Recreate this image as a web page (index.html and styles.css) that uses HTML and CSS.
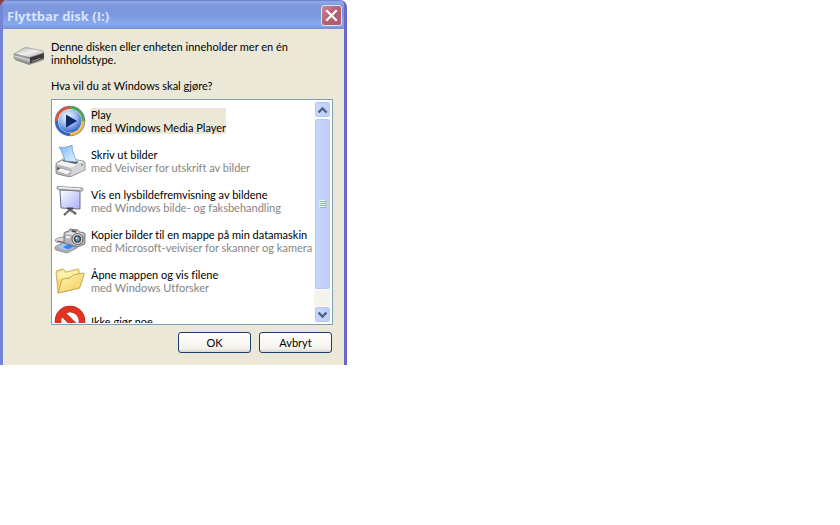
FILE: index.html
```html
<!DOCTYPE html>
<html lang="nb">
<head>
<meta charset="utf-8">
<title>Flyttbar disk (I:)</title>
<link rel="stylesheet" href="styles.css">
</head>
<body>
<main class="dialog">
  <header class="titlebar">
    <h1 class="title">Flyttbar disk (I:)</h1>
    <button class="close" type="button" aria-label="Lukk">
      <svg viewBox="0 0 19 19" width="19" height="19"><path d="M5 5l9 9M14 5l-9 9" stroke="#fff" stroke-width="2.2" stroke-linecap="square"/></svg>
    </button>
  </header>
  <div class="content">
    <svg class="drive" viewBox="0 0 32 32" width="32" height="32">
      <defs><linearGradient id="dr" x1="0" y1="0" x2="1" y2="1"><stop offset="0" stop-color="#b0b0b0"/><stop offset=".5" stop-color="#f0f0f0"/><stop offset="1" stop-color="#a4a4a4"/></linearGradient></defs>
      <path d="M2 20l14 5 15-5v-3H2z" fill="#6e6c66" opacity=".7"/>
      <path d="M1 14L11 8q1-.5 3-.3l15 3q2 .5 2 2L17 17.500z" fill="url(#dr)" stroke="#888" stroke-width=".6"/>
      <path d="M1 14l16 4v5.500L2 19q-1-.5-1-2z" fill="#a8a8a8" stroke="#777" stroke-width=".5"/>
      <path d="M1.500 16L17 20.500" stroke="#eee" stroke-width=".8"/>
      <path d="M17 17.500l14-4.500v4q0 1-1 1.500l-13 5z" fill="#383838"/>
      <path d="M18.500 21.500l9-3.200" stroke="#999"/>
    </svg>
    <div class="body">
      <p class="text">Denne disken eller enheten inneholder mer en én innholdstype.</p>
      <p class="text">Hva vil du at Windows skal gjøre?</p>
      <div class="list">
        <div class="items">
          <button class="item selected" type="button">
            <svg viewBox="0 0 32 32" width="32" height="32">
              <defs><radialGradient id="wm" cx=".4" cy=".3" r=".75"><stop offset="0" stop-color="#f3f9ff"/><stop offset=".5" stop-color="#9dbcf0"/><stop offset="1" stop-color="#2c58bd"/></radialGradient></defs>
              <circle cx="16" cy="16" r="15.3" fill="#75809c"/>
              <path d="M16 16V1.500A14.500 14.500 0 0 0 1.500 16z" fill="#e8512c"/>
              <path d="M16 16h14.500A14.500 14.500 0 0 0 16 1.500z" fill="#49ac4b"/>
              <path d="M16 16v14.500A14.500 14.500 0 0 0 30.500 16z" fill="#f5bd2f"/>
              <path d="M16 16H1.500A14.500 14.500 0 0 0 16 30.500z" fill="#2b64d0"/>
              <circle cx="16" cy="16" r="12" fill="#e5edfa"/>
              <circle cx="16" cy="16" r="11.500" fill="url(#wm)"/>
              <path d="M12 9.500L23 16 12 22.500z" fill="#102a67"/>
            </svg>
            <span class="label"><span>Play</span><span class="sub">med Windows Media Player</span></span>
          </button>
          <button class="item" type="button">
            <svg viewBox="0 0 32 32" width="32" height="32">
              <defs><linearGradient id="pp" x1="0" y1="0" x2="1" y2="1"><stop offset="0" stop-color="#74b6fa"/><stop offset="1" stop-color="#eaf6ff"/></linearGradient></defs>
              <path d="M2 20q0-2 1-2.500L11 13l18 3q2 .5 2 2v7L16 32 3 29q-1-.5-1-2z" fill="#bcbcc0" stroke="#777" stroke-width=".8"/>
              <path d="M2.500 19L11 13.500l18.500 3L17 23z" fill="#f2f2f2"/>
              <path d="M17 23l13.500-6v8L17 31z" fill="#d4d4d8"/>
              <path d="M8 16l14 3 3-2-14-3z" fill="#555"/>
              <path d="M5 2c5 1 9 0 13-2 0 6 2 11 5 17l-12-1C9 10 8 6 5 2z" fill="url(#pp)" stroke="#6b8cbd" stroke-width=".7"/>
              <path d="M3 22l13 4v2L3 25z" fill="#555"/>
              <path d="M2 26l5-3 11 3-5 4z" fill="#f4f4f4" stroke="#888" stroke-width=".6"/>
              <circle cx="28" cy="20" r="1" fill="#5aae4d"/>
            </svg>
            <span class="label"><span>Skriv ut bilder</span><span class="sub">med Veiviser for utskrift av bilder</span></span>
          </button>
          <button class="item" type="button">
            <svg viewBox="0 0 32 32" width="32" height="32">
              <defs><linearGradient id="sc" x1="0" y1="0" x2="1" y2="1"><stop offset="0" stop-color="#fff"/><stop offset="1" stop-color="#a9aef4"/></linearGradient></defs>
              <path d="M16 23v4M16 25l-6 5M16 25l6 4" stroke="#555" stroke-width="2.200" fill="none"/>
              <path d="M16 26l-4 3M16 26l4 2.500" stroke="#bbb" fill="none"/>
              <path d="M6 5l20 1v18L7 23z" fill="url(#sc)" stroke="#696c91"/>
              <path d="M4 1.500L28 3q1 0 1 1.500t-1 1.500L4 4.500Q3 4.500 3 3t1-1.500z" fill="#d0d0d6" stroke="#777" stroke-width=".8"/>
              <path d="M5 2.500l21 1.300" stroke="#fff"/>
              <path d="M13 23.500h6" stroke="#444" stroke-width="2"/>
            </svg>
            <span class="label"><span>Vis en lysbildefremvisning av bildene</span><span class="sub">med Windows bilde- og faksbehandling</span></span>
          </button>
          <button class="item" type="button">
            <svg viewBox="0 0 32 32" width="32" height="32">
              <path d="M1 22l9-5 13 3v3l-10 5L2 25q-1-.5-1-1.500z" fill="#aeb0b5" stroke="#777" stroke-width=".7"/>
              <path d="M3 22l8-4 11 2.500-9 5z" fill="#9fc8ff"/>
              <path d="M9 22l6-3 6 1.500-7 4z" fill="#3184ff"/>
              <path d="M1 15q3-3 8-3l5 1v5L2 17z" fill="#dcdcde" stroke="#777" stroke-width=".7"/>
              <path d="M3 16l10 2" stroke="#555"/>
              <path d="M10 9q0-1.500 1.500-2L15 6l1-2 8 1 1.500 2 4 .5q1.500.5 1.500 2V18q0 1-1 1.500l-7 2.500-13-4z" fill="#b4b5b8" stroke="#606166" stroke-width=".8"/>
              <path d="M10.500 9l5-2 1.500-2 7 1 1.500 2 4 .5-4 2z" fill="#e6e6e8"/>
              <path d="M17.500 5l5 .7v2l-5-.7z" fill="#505258"/>
              <path d="M12 11l4 .5v2l-4-.5z" fill="#f6f6f8"/>
              <circle cx="23.500" cy="14" r="5.500" fill="#ddd" stroke="#57585c"/>
              <circle cx="23.500" cy="14" r="3.700" fill="#38404a"/>
              <circle cx="23.500" cy="14" r="2.200" fill="#6f9aba"/>
              <circle cx="22.500" cy="13" r="1" fill="#e4f6ff"/>
            </svg>
            <span class="label"><span>Kopier bilder til en mappe på min datamaskin</span><span class="sub">med Microsoft-veiviser for skanner og kamera</span></span>
          </button>
          <button class="item" type="button">
            <svg viewBox="0 0 32 32" width="32" height="32">
              <defs><linearGradient id="fo" x1="0" y1="0" x2="1" y2="1"><stop offset="0" stop-color="#fff8b4"/><stop offset="1" stop-color="#f2c95a"/></linearGradient></defs>
              <path d="M2 7q0-1 1-1.500L9 4q1 0 2 2l1 1 12-3q1 0 1 1v18L4 28z" fill="#f3d874" stroke="#b99b45" stroke-width=".7"/>
              <path d="M3 8l6-3 2 3 13-3v5L4 14z" fill="#fdf0a9"/>
              <path d="M4 28l4-13q0-1 1-1l7-1 3-3 10-2q2 0 1 2l-4 12q0 1-2 1.500z" fill="url(#fo)" stroke="#bb9940" stroke-width=".8"/>
            </svg>
            <span class="label"><span>Åpne mappen og vis filene</span><span class="sub">med Windows Utforsker</span></span>
          </button>
          <button class="item" type="button">
            <svg viewBox="0 0 32 32" width="32" height="32">
              <circle cx="16" cy="16" r="12" fill="#fff" stroke="#b51f14" stroke-width="6.500"/>
              <path d="M8 8l16 16" stroke="#b51f14" stroke-width="6"/>
              <circle cx="16" cy="16" r="12" fill="none" stroke="#e23222" stroke-width="5.500"/>
              <path d="M8 8l16 16" stroke="#e23222" stroke-width="5"/>
            </svg>
            <span class="label"><span>Ikke gjør noe</span></span>
          </button>
        </div>
        <div class="scrollbar">
          <button class="arrow" type="button" aria-label="Rull opp"><svg viewBox="0 0 11 8" width="11" height="8"><path d="M1.500 6.500l4-4 4 4" fill="none" stroke="#4d6185" stroke-width="2.400"/></svg></button>
          <div class="thumb"><svg viewBox="0 0 7 8" width="7" height="8"><path d="M0 .5h6M0 2.500h6M0 4.500h6M0 6.500h6" stroke="#eef4fe"/><path d="M1 1.500h6M1 3.500h6M1 5.500h6M1 7.500h6" stroke="#8cb0f8"/></svg></div>
          <div class="track"></div>
          <button class="arrow" type="button" aria-label="Rull ned"><svg viewBox="0 0 11 8" width="11" height="8"><path d="M1.500 1.500l4 4 4-4" fill="none" stroke="#4d6185" stroke-width="2.400"/></svg></button>
        </div>
      </div>
      <footer class="actions">
        <button class="action" type="button">OK</button>
        <button class="action" type="button">Avbryt</button>
      </footer>
    </div>
  </div>
</main>
</body>
</html>
```
FILE: styles.css
```css
* { box-sizing: border-box; }

body {
  margin: 0;
  background: linear-gradient(#8e3a3a, #8e3a3a) 0 0 / 6px 6px no-repeat #fff;
  color: #000;
  font: 11px/13px Lato, "Liberation Sans", sans-serif;
  font-variant-ligatures: none;
}

button {
  margin: 0;
  padding: 0;
  border: 0;
  background: none;
  color: inherit;
  font: inherit;
  font-variant-ligatures: none;
}

svg { display: block; flex: none; }

.dialog {
  max-width: 347px;
  border: solid #7684d8;
  border-width: 0 3px;
  border-right-color: #6667c6;
  border-radius: 7px 7px 0 0;
  background: #ebe8d8;
  overflow: hidden;
}

.titlebar {
  display: flex;
  align-items: center;
  justify-content: space-between;
  height: 29px;
  margin: 0 -3px;
  padding: 2px 5px 0 7px;
  background: linear-gradient(#6678c8 0, #91ade9 2px, #7e98de 5px, #7b97df 14px, #86a9ee 24px, #809de4 27px, #7189d7 29px);
}

.title {
  margin: 0;
  color: #d8e4f8;
  font: bold 13px/16px "Open Sans", "Noto Sans", sans-serif;
}

.close {
  display: flex;
  width: 21px;
  height: 21px;
  border: 1px solid #dce2f5;
  border-radius: 3px;
  background: linear-gradient(135deg, #cb8795, #b66073 50%, #ae596c);
}

.content {
  display: flex;
  gap: 6px;
  padding: 11px 11px 12px 10px;
}

.body { flex: 1; min-width: 0; }

.text { margin: 0 0 13px; }

.text + .text { margin-bottom: 7px; }

.list {
  display: flex;
  height: 226px;
  border: 1px solid #7f9db9;
  background: #fff;
  padding: 1px;
  overflow: hidden;
}

.items {
  flex: 1;
  min-width: 0;
  overflow: hidden;
}

.item {
  display: flex;
  align-items: center;
  gap: 5px;
  width: 100%;
  height: 40px;
  padding-left: 1px;
  text-align: left;
  white-space: nowrap;
}

.label { display: flex; flex-direction: column; }

.sub { color: #858585; }

.selected .label { background: #ebe8d8; }

.selected .sub { color: #000; }

.scrollbar {
  display: flex;
  flex: none;
  flex-direction: column;
  width: 17px;
  background: #f4f3ee;
}

.arrow,
.thumb {
  display: flex;
  align-items: center;
  justify-content: center;
  border: 1px solid #fff;
  border-radius: 3px;
  background: linear-gradient(90deg, #c9d8fc, #bccdf9);
  box-shadow: inset 0 0 0 1px #b4c8f2;
}

.arrow { flex: none; height: 17px; }

.thumb { flex: 7; }

.track { flex: 1 1 0; max-height: 16px; }

.actions {
  display: flex;
  justify-content: flex-end;
  gap: 8px;
  padding: 7px 1px 0 0;
}

.action {
  width: 73px;
  height: 21px;
  border: 1px solid #1c3e70;
  border-radius: 3px;
  background: linear-gradient(#fff, #f4f3ee 80%, #dcd8cf);
}
```
